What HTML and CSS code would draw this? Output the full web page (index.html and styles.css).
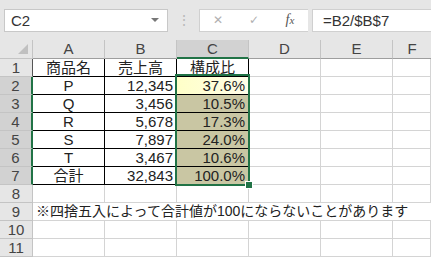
FILE: index.html
```html
<!DOCTYPE html>
<html lang="ja">
  <head>
    <meta charset="UTF-8" />
    <title>構成比</title>
    <link rel="stylesheet" href="styles.css">
  </head>
  <body>
    <!-- 数式バー -->
    <div class="toolbar">
      <div class="name-box">
        <span>C2</span>
        <span class="drop"></span>
      </div>
      <div class="grip">⋮</div>
      <div class="btn-box">
        <span class="btn">✕</span>
        <span class="btn">✓</span>
        <span class="btn fx">f<small>x</small></span>
      </div>
      <div class="formula">=B2/$B$7</div>
    </div>

    <!-- シート -->
    <div class="sheet">
      <div class="grid">
        <div class="hd corner"><span class="tri"></span></div>
        <div class="hd">A</div>
        <div class="hd">B</div>
        <div class="hd on">C</div>
        <div class="hd">D</div>
        <div class="hd">E</div>
        <div class="hd last">F</div>

        <div class="rh top">1</div>
        <div class="c b ctr">商品名</div>
        <div class="c b ctr">売上高</div>
        <div class="c b ctr">構成比</div>
        <div class="c"></div>
        <div class="c"></div>
        <div class="c"></div>

        <div class="rh on">2</div>
        <div class="c b ctr">P</div>
        <div class="c b num">12,345</div>
        <div class="c b num act">37.6%</div>
        <div class="c"></div>
        <div class="c"></div>
        <div class="c"></div>

        <div class="rh on">3</div>
        <div class="c b ctr">Q</div>
        <div class="c b num">3,456</div>
        <div class="c b num sel">10.5%</div>
        <div class="c"></div>
        <div class="c"></div>
        <div class="c"></div>

        <div class="rh on">4</div>
        <div class="c b ctr">R</div>
        <div class="c b num">5,678</div>
        <div class="c b num sel">17.3%</div>
        <div class="c"></div>
        <div class="c"></div>
        <div class="c"></div>

        <div class="rh on">5</div>
        <div class="c b ctr">S</div>
        <div class="c b num">7,897</div>
        <div class="c b num sel">24.0%</div>
        <div class="c"></div>
        <div class="c"></div>
        <div class="c"></div>

        <div class="rh on">6</div>
        <div class="c b ctr">T</div>
        <div class="c b num">3,467</div>
        <div class="c b num sel">10.6%</div>
        <div class="c"></div>
        <div class="c"></div>
        <div class="c"></div>

        <div class="rh on">7</div>
        <div class="c b ctr">合計</div>
        <div class="c b num">32,843</div>
        <div class="c b num sel">100.0%</div>
        <div class="c"></div>
        <div class="c"></div>
        <div class="c"></div>

        <div class="rh">8</div>
        <div class="c"></div>
        <div class="c"></div>
        <div class="c"></div>
        <div class="c"></div>
        <div class="c"></div>
        <div class="c"></div>

        <div class="rh">9</div>
        <div class="c note">※四捨五入によって合計値が100にならないことがあります</div>

        <div class="rh">10</div>
        <div class="c"></div>
        <div class="c"></div>
        <div class="c"></div>
        <div class="c"></div>
        <div class="c"></div>
        <div class="c"></div>

        <div class="rh">11</div>
        <div class="c"></div>
        <div class="c"></div>
        <div class="c"></div>
        <div class="c"></div>
        <div class="c"></div>
        <div class="c"></div>
      </div>

      <!-- 選択範囲 C2:C7 -->
      <div class="selection"><span class="handle"></span></div>
    </div>
  </body>
</html>
```

FILE: styles.css
```css
body {
  margin: 0;
  width: 431px;
  height: 257px;
  overflow: hidden;
  background: #ffffff;
  font-family: "Liberation Sans", "Noto Sans CJK JP", sans-serif;
  color: #222;
}

/* 数式バー */
.toolbar {
  display: flex;
  align-items: center;
  height: 40px;
  padding-left: 4px;
  background-color: #e6e6e6;
  box-sizing: border-box;
}

.name-box {
  display: flex;
  align-items: center;
  justify-content: space-between;
  width: 164px;
  height: 23px;
  padding: 0 6px 0 6px;
  box-sizing: border-box;
  background: #fff;
  border: 1px solid #c8c8c8;
  font-size: 15px;
  color: #333;
}

.drop {
  width: 0;
  height: 0;
  border-left: 4px solid transparent;
  border-right: 4px solid transparent;
  border-top: 4px solid #777;
  margin-right: 2px;
}

.grip {
  width: 31px;
  text-align: center;
  color: #b8b8b8;
  font-size: 14px;
}

.btn-box {
  display: flex;
  align-items: center;
  width: 109px;
  height: 23px;
  box-sizing: border-box;
  background: #fff;
  border: 1px solid #d0d0d0;
  border-right: none;
}

.btn {
  width: 36px;
  text-align: center;
  color: #b0b0b0;
  font-family: "DejaVu Sans", sans-serif;
  font-size: 12px;
}

.btn.fx {
  color: #555;
  font-family: "Liberation Serif", serif;
  font-style: italic;
  font-size: 14px;
}

.btn.fx small {
  font-size: 11px;
}

.formula {
  flex: 1;
  height: 23px;
  margin-left: 4px;
  padding-left: 10px;
  box-sizing: border-box;
  background: #fff;
  border: 1px solid #d0d0d0;
  border-right: none;
  font-size: 15px;
  line-height: 21px;
  color: #333;
}

/* シート */
.sheet {
  position: relative;
}

.grid {
  display: grid;
  grid-template-columns: 33px 72px 72px 72px 72px 72px 1fr;
  grid-template-rows: 19px repeat(11, 18px);
}

.grid > div {
  box-sizing: border-box;
  font-size: 15px;
  line-height: 17px;
  white-space: nowrap;
}

.hd {
  background-color: #e6e6e6;
  border-right: 1px solid #c4c4c4;
  border-bottom: 1px solid #9e9e9e;
  text-align: center;
  color: #444;
  line-height: 18px !important;
}

.hd.corner {
  position: relative;
  border-bottom-color: #c4c4c4;
}

.tri {
  position: absolute;
  right: 4px;
  bottom: 4px;
  width: 0;
  height: 0;
  border-left: 10px solid transparent;
  border-bottom: 10px solid #c0c0c0;
}

.hd.on {
  background-color: #d2d2d2;
  border-bottom: 2px solid #217346;
}

.hd.last {
  border-right: none;
}

.rh {
  background-color: #e6e6e6;
  border-right: 1px solid #c4c4c4;
  border-bottom: 1px solid #c4c4c4;
  text-align: center;
  color: #444;
}

.rh.top {
  border-right-color: #555;
}

.rh.on {
  background-color: #d2d2d2;
  border-right: 2px solid #217346;
}

.c {
  border-right: 1px solid #d4d4d4;
  border-bottom: 1px solid #d4d4d4;
  padding: 0 3px;
}

.c.b {
  border-right-color: #000;
  border-bottom-color: #000;
}

.ctr {
  text-align: center;
}

.num {
  text-align: right;
}

.act {
  background: linear-gradient(to right, #ffffc8, #fffde8);
}

.sel {
  background-color: #c9c6a3;
}

.note {
  grid-column: 2 / -1;
  border-right: none !important;
  font-size: 14px !important;
}

/* 選択範囲の枠 */
.selection {
  position: absolute;
  left: 175px;
  top: 34px;
  width: 75px;
  height: 112px;
  border: 2px solid #217346;
  box-sizing: border-box;
}

.handle {
  position: absolute;
  right: -5px;
  bottom: -5px;
  width: 6px;
  height: 6px;
  background: #217346;
  border: 1px solid #fff;
}
```
